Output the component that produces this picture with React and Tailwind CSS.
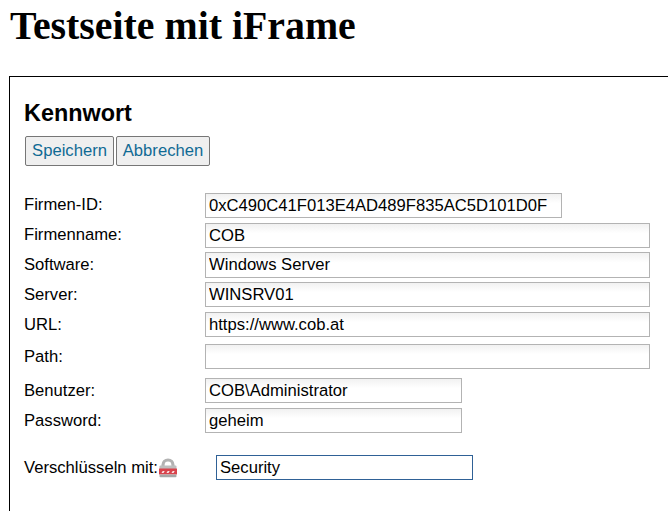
import React from 'react';

const inputClass =
  'border border-[#b3b3b3] bg-linear-to-b from-[#f1f1f1] to-white to-40% px-[3px] text-[16.64px] text-black outline-none';

function LockIcon() {
  return (
    <svg width="20" height="20" viewBox="0 0 20 20" className="shrink-0">
      <path d="M5 9V7a5 5 0 0 1 10 0V9" fill="none" stroke="#b2b2b2" strokeWidth="3.200" />
      <rect x="1.500" y="7.500" width="17" height="3.500" rx="1" fill="#bdbdbd" />
      <rect x="1" y="10.500" width="18" height="6" fill="#d8434c" />
      <path d="M3.500 15l1.200-2h2l-1.200 2zM8.500 15l1.200-2h2l-1.200 2zM13.500 15l1.200-2h2l-1.200 2z" fill="#fff" opacity="0.850" />
      <rect x="1.500" y="16.500" width="17" height="2.800" rx="1" fill="#a6a6a6" />
    </svg>
  );
}

function Row({ label, value, width, className = '', labelClass = '', inputHeight = 'h-[25px]' }) {
  return (
    <div className={`flex items-center ${className}`}>
      <label className={`w-[181px] shrink-0 text-[16.64px] leading-[25px] ${labelClass}`}>{label}</label>
      <input readOnly value={value} className={`${inputClass} ${inputHeight} ${width}`} />
    </div>
  );
}

export default function App() {
  return (
    <div className="h-[511px] w-[668px] overflow-hidden bg-white pl-[9px] text-black">
      <h1 className="pt-[3px] pl-px font-['Liberation_Serif',serif] text-[39.84px] leading-[46px] font-bold">
        Testseite mit iFrame
      </h1>
      <div className="mt-[27px] h-[500px] w-[800px] border border-black pt-[23px] pl-[14px] font-['Liberation_Sans',Arial,sans-serif]">
        <h2 className="text-[23.4px] leading-[26px] font-bold">Kennwort</h2>
        <div className="mt-[10px] flex gap-[2px] pl-px">
          <button className="h-[30px] w-[89px] rounded-[2px] border border-[#767676] bg-[#efefef] text-[16.64px] text-[#0f6a94]">
            Speichern
          </button>
          <button className="h-[30px] w-[94px] rounded-[2px] border border-[#767676] bg-[#efefef] text-[16.64px] text-[#0f6a94]">
            Abbrechen
          </button>
        </div>
        <div className="mt-[27px] flex flex-col">
          <Row label="Firmen-ID:" value="0xC490C41F013E4AD489F835AC5D101D0F" width="w-[357px]" labelClass="-translate-y-px" />
          <Row label="Firmenname:" value="COB" width="w-[445px]" className="mt-[5px]" labelClass="-translate-y-px" />
          <Row label="Software:" value="Windows Server" width="w-[445px]" inputHeight="h-[26px]" className="mt-[4px]" labelClass="-translate-y-px" />
          <Row label="Server:" value="WINSRV01" width="w-[445px]" className="mt-[4px]" />
          <Row label="URL:" value="https://www.cob.at" width="w-[445px]" className="mt-[5px]" />
          <Row label="Path:" value="" width="w-[445px]" className="mt-[7px]" />
          <Row label="Benutzer:" value="COB\Administrator" width="w-[257px]" className="mt-[9px]" />
          <Row label="Password:" value="geheim" width="w-[257px]" className="mt-[5px]" />
          <div className="mt-[22px] flex items-center">
            <label className="w-[134px] shrink-0 text-[16.64px] leading-[25px]">Verschlüsseln mit:</label>
            <LockIcon />
            <input
              readOnly
              value="Security"
              className="ml-[38px] h-[25px] w-[257px] border border-[#2f6196] bg-white px-[3px] text-[16.64px] text-black outline-none"
            />
          </div>
        </div>
      </div>
    </div>
  );
}
